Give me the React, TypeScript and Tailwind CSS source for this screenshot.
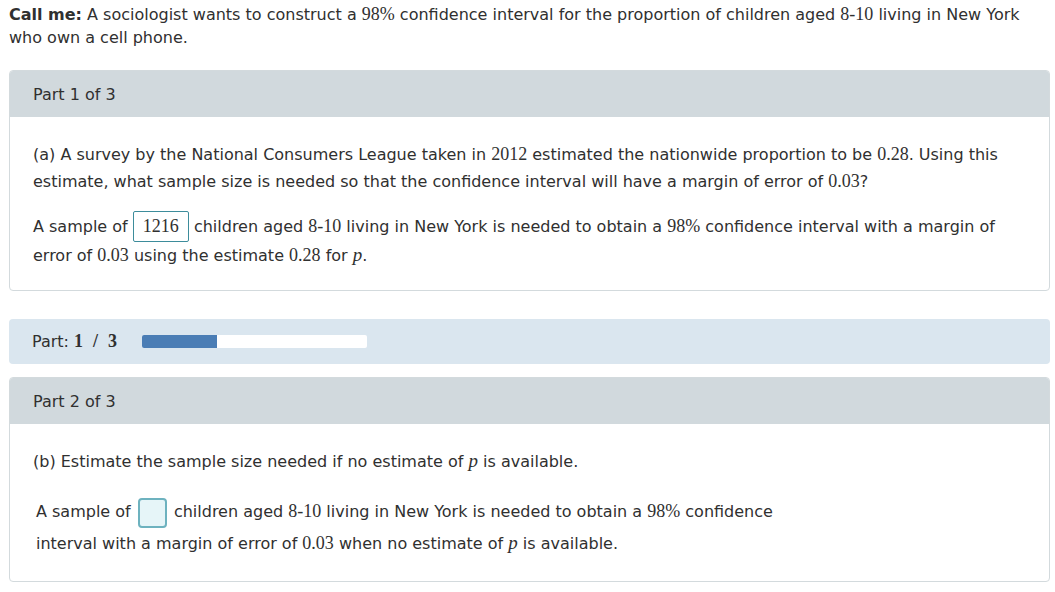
import React from "react";

const sans = "font-['DejaVu_Sans','Verdana',sans-serif]";
const serif = "font-['Liberation_Serif','Times_New_Roman',serif]";

function N({ children }: { children: React.ReactNode }) {
  return <span className={`${serif} text-[18px]`}>{children}</span>;
}

function P() {
  return <span className={`${serif} italic text-[19px]`}>p</span>;
}

export default function App() {
  return (
    <div className={`${sans} text-[#303030] bg-white w-[1055px] h-[592px] overflow-hidden pl-[9px] pr-[5px] pt-[3px]`}>
      <p className="text-[16px] leading-[23px]">
        <b>Call me:</b> A sociologist wants to construct a <N>98%</N> confidence interval for the proportion of children aged <N>8-10</N> living in New York who own a cell phone.
      </p>

      <div className="mt-[21px] rounded-[4px] border border-[#d3dadd] overflow-hidden">
        <div className="h-[46px] pt-[2px] bg-[#d1d9dd] flex items-center pl-[23px] text-[16px]">Part 1 of 3</div>
        <div className="px-[23px] pt-[24px] pb-[20px] text-[16px]">
          <p className="leading-[27px]">
            (a) A survey by the National Consumers League taken in <N>2012</N> estimated the nationwide proportion to be <N>0.28</N>. Using this estimate, what sample size is needed so that the confidence interval will have a margin of error of <N>0.03</N>?
          </p>
          <p className="leading-[28px] mt-[17px]">
            A sample of{" "}
            <span className={`${serif} text-[18px] inline-block h-[31px] leading-[29px] px-[9px] border border-[#3d8c9b] rounded-[2px] -my-[4px] align-baseline`}>1216</span>{" "}
            children aged <N>8-10</N> living in New York is needed to obtain a <N>98%</N> confidence interval with a margin of error of <N>0.03</N> using the estimate <N>0.28</N> for <P />.
          </p>
        </div>
      </div>

      <div className="mt-[28px] h-[45px] rounded-[4px] bg-[#dae6ef] flex items-center pl-[23px] text-[16px]">
        <span>Part:&nbsp;</span>
        <span className={`${serif} font-bold text-[18px]`}>
          1<span className="mx-[10px]">/</span>3
        </span>
        <div className="ml-[25px] w-[225px] h-[13px] bg-white rounded-[2px] overflow-hidden">
          <div className="h-full bg-[#4a7db5]" style={{ width: `${(1 / 3) * 100}%` }} />
        </div>
      </div>

      <div className="mt-[13px] rounded-[4px] border border-[#d3dadd] overflow-hidden">
        <div className="h-[46px] pt-[2px] bg-[#d1d9dd] flex items-center pl-[23px] text-[16px]">Part 2 of 3</div>
        <div className="pl-[23px] pr-[23px] pt-[23px] pb-[22px] text-[16px]">
          <p className="leading-[27px]">
            (b) Estimate the sample size needed if no estimate of <P /> is available.
          </p>
          <p className="leading-[31px] mt-[21px] pl-[3px] max-w-[770px]">
            A sample of{" "}
            <span className="inline-block w-[29px] h-[30px] bg-[#e6f5f8] border-2 border-[#6db2bf] rounded-[4px] align-middle mx-[2px] -my-[4px]"></span>{" "}
            children aged <N>8-10</N> living in New York is needed to obtain a <N>98%</N> confidence interval with a margin of error of <N>0.03</N> when no estimate of <P /> is available.
          </p>
        </div>
      </div>
    </div>
  );
}
